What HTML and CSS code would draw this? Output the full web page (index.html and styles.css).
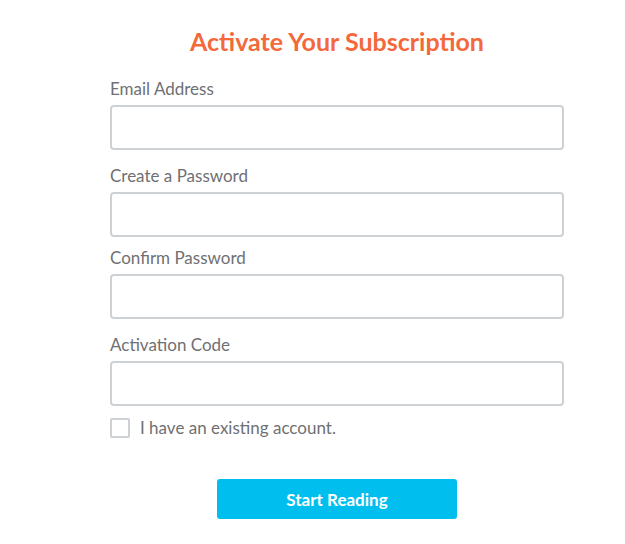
FILE: index.html
```html
<!DOCTYPE html>
<html lang="en">
<head>
    <meta charset="UTF-8">
    <meta name="viewport" content="width=device-width, initial-scale=1.0">
    <title>Activate Your Subscription</title>
    <link rel="stylesheet" href="styles.css">
</head>
<body>

<form id="activate-form">
    <h1>Activate Your Subscription</h1>

    <div class="form-field">
        <label for="email">Email Address</label>
        <input type="email" id="email">
    </div>
    <div class="form-field form-field-tight">
        <label for="password">Create a Password</label>
        <input type="password" id="password">
    </div>
    <div class="form-field">
        <label for="confirm">Confirm Password</label>
        <input type="password" id="confirm">
    </div>
    <div class="form-field">
        <label for="code">Activation Code</label>
        <input type="text" id="code">
    </div>

    <div class="check-row">
        <input type="checkbox" id="existing">
        <label for="existing">I have an existing account.</label>
    </div>

    <div class="actions">
        <button type="button">Start Reading</button>
    </div>
</form>

</body>
</html>
```

FILE: styles.css
```css
body {
    margin: 0;
    padding: 0;
    background: #fff;
    font-family: Lato, "Open Sans", sans-serif;
}

#activate-form {
    width: 454px;
    margin-left: 110px;
    padding-top: 26px;
}

h1 {
    margin: 0 0 22px;
    font-size: 25px;
    line-height: 30px;
    font-weight: 700;
    color: #f4693b;
    text-align: center;
}

.form-field {
    margin-bottom: 15px;
}

.form-field-tight {
    margin-bottom: 10px;
}

.form-field label {
    display: block;
    font-size: 17px;
    line-height: 22px;
    color: #6f7073;
    margin-bottom: 5px;
}

.form-field input {
    display: block;
    box-sizing: border-box;
    width: 100%;
    height: 45px;
    margin: 0;
    padding: 0 12px;
    border: 2px solid #cdd1d4;
    border-radius: 4px;
    background: #fff;
    font-family: inherit;
    font-size: 16px;
}

.check-row {
    display: flex;
    align-items: center;
    gap: 10px;
    margin-top: -3px;
}

.check-row input {
    appearance: none;
    -webkit-appearance: none;
    box-sizing: border-box;
    width: 20px;
    height: 20px;
    margin: 0;
    border: 2px solid #cdd1d4;
    border-radius: 2px;
    background: #fff;
}

.check-row label {
    font-size: 17px;
    line-height: 20px;
    color: #6f7073;
}

.actions {
    display: flex;
    justify-content: center;
    margin-top: 41px;
}

button {
    width: 240px;
    height: 40px;
    border: none;
    border-radius: 3px;
    background: #00bfee;
    color: #fff;
    font-family: inherit;
    font-size: 17px;
    font-weight: 700;
    cursor: pointer;
}
```
